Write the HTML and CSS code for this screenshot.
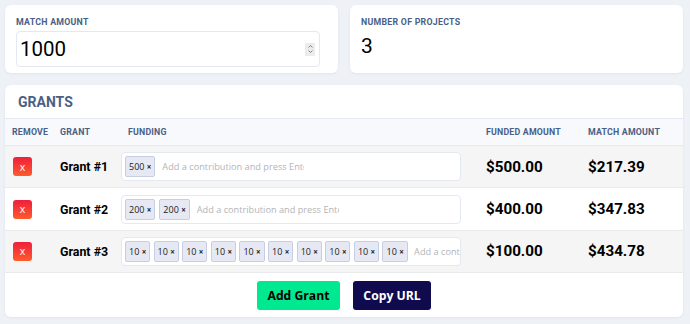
FILE: index.html
```html
<html>
<head>
    <link rel="stylesheet" href="styles.css">
</head>
<body>
    <div class="top-row">
        <div class="card stat-card">
            <label class="field-label" for="matchAmount">Match Amount</label>
            <div class="number-box">
                <input type="text" id="matchAmount" value="1000">
                <span class="spinner">
                    <svg width="9" height="12" viewBox="0 0 9 12"><path d="M2.5 4.5 L4.5 2.5 L6.5 4.5 M2.5 7.5 L4.5 9.5 L6.5 7.5" fill="none" stroke="#777" stroke-width="0.9"/></svg>
                </span>
            </div>
        </div>
        <div class="card stat-card">
            <div class="field-label">Number of Projects</div>
            <div class="stat-value">3</div>
        </div>
    </div>

    <div class="card grants-card">
        <h2>Grants</h2>
        <table id="grantTable">
            <colgroup>
                <col style="width:48px">
                <col style="width:68px">
                <col style="width:358px">
                <col style="width:102px">
                <col>
            </colgroup>
            <thead>
                <tr>
                    <th>Remove</th>
                    <th>Grant</th>
                    <th>Funding</th>
                    <th>Funded Amount</th>
                    <th>Match Amount</th>
                </tr>
            </thead>
            <tbody id="grantBody">
                <tr class="shaded">
                    <td><button class="delete-btn">x</button></td>
                    <td class="grant-name">Grant #1</td>
                    <td class="funding-cell">
                        <div class="tags-input">
                            <span class="tag">500 <b>×</b></span>
                            <input type="text" placeholder="Add a contribution and press Enter">
                        </div>
                    </td>
                    <td class="amount">$500.00</td>
                    <td class="amount">$217.39</td>
                </tr>
                <tr>
                    <td><button class="delete-btn">x</button></td>
                    <td class="grant-name">Grant #2</td>
                    <td class="funding-cell">
                        <div class="tags-input">
                            <span class="tag">200 <b>×</b></span>
                            <span class="tag">200 <b>×</b></span>
                            <input type="text" placeholder="Add a contribution and press Enter">
                        </div>
                    </td>
                    <td class="amount">$400.00</td>
                    <td class="amount">$347.83</td>
                </tr>
                <tr class="shaded">
                    <td><button class="delete-btn">x</button></td>
                    <td class="grant-name">Grant #3</td>
                    <td class="funding-cell">
                        <div class="tags-input tight">
                            <span class="tag">10 <b>×</b></span>
                            <span class="tag">10 <b>×</b></span>
                            <span class="tag">10 <b>×</b></span>
                            <span class="tag">10 <b>×</b></span>
                            <span class="tag">10 <b>×</b></span>
                            <span class="tag">10 <b>×</b></span>
                            <span class="tag">10 <b>×</b></span>
                            <span class="tag">10 <b>×</b></span>
                            <span class="tag">10 <b>×</b></span>
                            <span class="tag">10 <b>×</b></span>
                            <input type="text" placeholder="Add a contribution and press Enter">
                        </div>
                    </td>
                    <td class="amount">$100.00</td>
                    <td class="amount">$434.78</td>
                </tr>
            </tbody>
        </table>
        <div class="actions">
            <button class="add-btn">Add Grant</button>
            <button class="copy-btn">Copy URL</button>
        </div>
    </div>
</body>
</html>
```

FILE: styles.css
```css
body {
    font-family: Roboto, "Liberation Sans", sans-serif;
    background-color: #eef1f6;
    margin: 0;
    padding: 5px 7px 5px 5px;
}
.card {
    background-color: #fff;
    border-radius: 6px;
    box-shadow: 0px 1px 3px rgba(40, 60, 100, 0.06);
}
.top-row {
    display: flex;
    gap: 12px;
}
.stat-card {
    flex: 1;
    height: 68px;
    box-sizing: border-box;
    padding: 12px 11px 0 11px;
}
.field-label {
    display: block;
    font-size: 8.8px;
    font-weight: bold;
    letter-spacing: 0.25px;
    text-transform: uppercase;
    color: #4a5f86;
    line-height: 11px;
    margin-bottom: 3px;
}
.number-box {
    display: flex;
    align-items: center;
    width: 304px;
    height: 36px;
    box-sizing: border-box;
    border: 1px solid #e4e8f0;
    border-radius: 4px;
    padding: 0 3px 0 3px;
}
.number-box input {
    flex: 1;
    border: none;
    outline: none;
    font-family: Roboto, "Liberation Sans", sans-serif;
    font-size: 20.5px;
    color: #000;
    padding: 0;
    width: 100px;
}
.spinner {
    display: flex;
    align-items: center;
    justify-content: center;
    width: 10px;
    height: 13px;
    background-color: #ececec;
    margin-right: 1px;
}
.stat-value {
    font-size: 21px;
    color: #000;
    padding-top: 3px;
}
.grants-card {
    margin-top: 12px;
    overflow: hidden;
}
.grants-card h2 {
    margin: 0;
    font-size: 14px;
    font-weight: bold;
    text-transform: uppercase;
    color: #4a5f86;
    height: 33px;
    line-height: 34px;
    padding-left: 13px;
}
#grantTable {
    width: 100%;
    border-collapse: collapse;
    table-layout: fixed;
}
#grantTable th {
    background-color: #f7f9fc;
    border-top: 1px solid #e4e9f1;
    border-bottom: 1px solid #e4e9f1;
    height: 27px;
    padding: 0 0 0 7px;
    text-align: left;
    font-size: 8.8px;
    font-weight: bold;
    letter-spacing: 0.2px;
    text-transform: uppercase;
    color: #4a5f86;
}
#grantTable td {
    height: 42.4px;
    padding: 0 0 0 7px;
    border-bottom: 1px solid #e9eaee;
    vertical-align: middle;
}
#grantTable tr.shaded td {
    background-color: #f5f5f6;
}
#grantTable td.funding-cell {
    padding: 0 18px 0 0;
}
.delete-btn {
    width: 19px;
    height: 19px;
    padding: 0;
    border: none;
    border-radius: 3px;
    background: linear-gradient(#ee1f3d, #ff5a2c);
    color: #fff;
    font-family: "Open Sans", sans-serif;
    font-size: 10.5px;
    line-height: 18px;
    cursor: pointer;
    display: block;
    margin-left: 1px;
}
.grant-name {
    font-size: 12.4px;
    font-weight: bold;
    color: #000;
}
.amount {
    font-size: 15.2px;
    font-weight: bold;
    color: #000;
}
.tags-input {
    display: flex;
    align-items: center;
    gap: 4px;
    height: 29px;
    box-sizing: border-box;
    border: 1px solid #e4e8f0;
    border-radius: 4px;
    background-color: #fff;
    padding: 0 3px;
    overflow: hidden;
}
.tags-input.tight {
    gap: 3.4px;
}
.tag {
    flex-shrink: 0;
    height: 21px;
    box-sizing: border-box;
    line-height: 19px;
    padding: 0 3px;
    background-color: #e6e9f3;
    border: 1px solid #c7cee2;
    border-radius: 2px;
    font-family: "Open Sans", sans-serif;
    font-size: 9px;
    color: #222;
}
.tag b {
    font-size: 8px;
}
.tags-input input {
    flex: none;
    width: 148px;
    border: none;
    outline: none;
    background: transparent;
    font-family: "Open Sans", sans-serif;
    font-size: 9.2px;
    padding: 0 3px;
}
.tags-input input::placeholder {
    color: #b4b4b8;
}
.actions {
    display: flex;
    justify-content: center;
    gap: 13px;
    padding: 8px 0 7px 0;
}
.actions button {
    height: 29px;
    border: none;
    border-radius: 3px;
    font-family: "Open Sans", sans-serif;
    font-size: 12.2px;
    font-weight: bold;
    cursor: pointer;
}
.add-btn {
    width: 83px;
    background-color: #00e991;
    color: #000;
}
.copy-btn {
    width: 78px;
    background-color: #0f0b4e;
    color: #fff;
}
```
